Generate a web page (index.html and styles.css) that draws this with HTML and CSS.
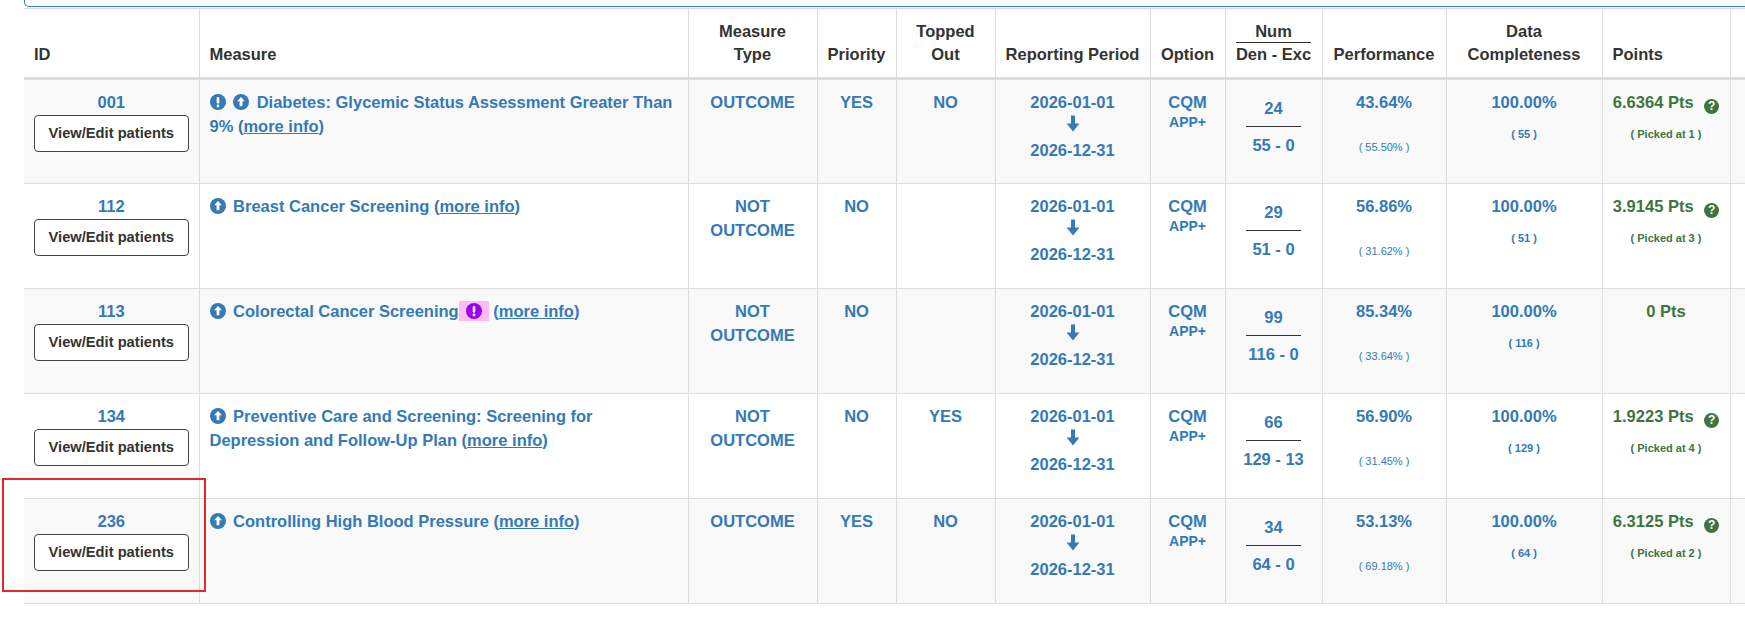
FILE: index.html
```html
<!DOCTYPE html>
<html lang="en">
<head>
<meta charset="utf-8">
<title>Quality Measures</title>
<link rel="stylesheet" href="styles.css">
</head>
<body>
<div class="page">
  <div class="panel-edge"></div>
  <table class="measures">
    <colgroup>
      <col class="c-id"><col class="c-measure"><col class="c-type"><col class="c-prio"><col class="c-top"><col class="c-period"><col class="c-opt"><col class="c-num"><col class="c-perf"><col class="c-dc"><col class="c-pts"><col class="c-extra">
    </colgroup>
    <thead>
      <tr>
        <th class="left first">ID</th>
        <th class="left">Measure</th>
        <th>Measure<br>Type</th>
        <th>Priority</th>
        <th>Topped<br>Out</th>
        <th>Reporting Period</th>
        <th>Option</th>
        <th><div class="numhd"><div class="numhd-top">Num</div>Den - Exc</div></th>
        <th>Performance</th>
        <th>Data<br>Completeness</th>
        <th class="left">Points</th>
        <th></th>
      </tr>
    </thead>
    <tbody>
      <tr>
        <td class="first"><div>001</div><button class="btn" type="button">View/Edit patients</button></td>
        <td class="measure"><svg class="ico" viewBox="0 0 16 16"><circle cx="8" cy="8" r="8" fill="#337ab7"/><rect x="6.7" y="3" width="2.6" height="6.6" rx="1.2" fill="#fff"/><circle cx="8" cy="12" r="1.45" fill="#fff"/></svg> <svg class="ico" viewBox="0 0 16 16"><circle cx="8" cy="8" r="8" fill="#337ab7"/><path d="M8 3.1 L11.9 7.3 H9.4 V12.3 H6.6 V7.3 H4.1 Z" fill="#fff"/></svg> Diabetes: Glycemic Status Assessment Greater Than 9% (<a href="#">more info</a>)</td>
        <td>OUTCOME</td>
        <td>YES</td>
        <td>NO</td>
        <td><div>2026-01-01</div><div class="arr"><svg viewBox="0 0 14 17"><path d="M5 0.5 H9 V8.6 H13.4 L7 16.5 L0.6 8.6 H5 Z" fill="#337ab7"/></svg></div><div>2026-12-31</div></td>
        <td><div>CQM</div><div class="app">APP+</div></td>
        <td><div class="fn">24</div><div class="fl"></div><div class="fd">55 - 0</div></td>
        <td><div>43.64%</div><div class="sm pf">( 55.50% )</div></td>
        <td><div>100.00%</div><div class="sm dc">( 55 )</div></td>
        <td class="pts"><div class="pline">6.6364 Pts <span class="q">?</span></div><div class="sm dc">( Picked at 1 )</div></td>
        <td></td>
      </tr>
      <tr>
        <td class="first"><div>112</div><button class="btn" type="button">View/Edit patients</button></td>
        <td class="measure"><svg class="ico" viewBox="0 0 16 16"><circle cx="8" cy="8" r="8" fill="#337ab7"/><path d="M8 3.1 L11.9 7.3 H9.4 V12.3 H6.6 V7.3 H4.1 Z" fill="#fff"/></svg> Breast Cancer Screening (<a href="#">more info</a>)</td>
        <td>NOT OUTCOME</td>
        <td>NO</td>
        <td></td>
        <td><div>2026-01-01</div><div class="arr"><svg viewBox="0 0 14 17"><path d="M5 0.5 H9 V8.6 H13.4 L7 16.5 L0.6 8.6 H5 Z" fill="#337ab7"/></svg></div><div>2026-12-31</div></td>
        <td><div>CQM</div><div class="app">APP+</div></td>
        <td><div class="fn">29</div><div class="fl"></div><div class="fd">51 - 0</div></td>
        <td><div>56.86%</div><div class="sm pf">( 31.62% )</div></td>
        <td><div>100.00%</div><div class="sm dc">( 51 )</div></td>
        <td class="pts"><div class="pline">3.9145 Pts <span class="q">?</span></div><div class="sm dc">( Picked at 3 )</div></td>
        <td></td>
      </tr>
      <tr>
        <td class="first"><div>113</div><button class="btn" type="button">View/Edit patients</button></td>
        <td class="measure"><svg class="ico" viewBox="0 0 16 16"><circle cx="8" cy="8" r="8" fill="#337ab7"/><path d="M8 3.1 L11.9 7.3 H9.4 V12.3 H6.6 V7.3 H4.1 Z" fill="#fff"/></svg> Colorectal Cancer Screening<span class="flag"><svg viewBox="0 0 16 16"><circle cx="8" cy="8" r="8" fill="#9a00f5"/><rect x="6.7" y="3" width="2.6" height="6.6" rx="1.2" fill="#fff"/><circle cx="8" cy="12" r="1.45" fill="#fff"/></svg></span> (<a href="#">more info</a>)</td>
        <td>NOT OUTCOME</td>
        <td>NO</td>
        <td></td>
        <td><div>2026-01-01</div><div class="arr"><svg viewBox="0 0 14 17"><path d="M5 0.5 H9 V8.6 H13.4 L7 16.5 L0.6 8.6 H5 Z" fill="#337ab7"/></svg></div><div>2026-12-31</div></td>
        <td><div>CQM</div><div class="app">APP+</div></td>
        <td><div class="fn">99</div><div class="fl"></div><div class="fd">116 - 0</div></td>
        <td><div>85.34%</div><div class="sm pf">( 33.64% )</div></td>
        <td><div>100.00%</div><div class="sm dc">( 116 )</div></td>
        <td class="pts"><div class="pline">0 Pts</div></td>
        <td></td>
      </tr>
      <tr>
        <td class="first"><div>134</div><button class="btn" type="button">View/Edit patients</button></td>
        <td class="measure"><svg class="ico" viewBox="0 0 16 16"><circle cx="8" cy="8" r="8" fill="#337ab7"/><path d="M8 3.1 L11.9 7.3 H9.4 V12.3 H6.6 V7.3 H4.1 Z" fill="#fff"/></svg> Preventive Care and Screening: Screening for Depression and Follow-Up Plan (<a href="#">more info</a>)</td>
        <td>NOT OUTCOME</td>
        <td>NO</td>
        <td>YES</td>
        <td><div>2026-01-01</div><div class="arr"><svg viewBox="0 0 14 17"><path d="M5 0.5 H9 V8.6 H13.4 L7 16.5 L0.6 8.6 H5 Z" fill="#337ab7"/></svg></div><div>2026-12-31</div></td>
        <td><div>CQM</div><div class="app">APP+</div></td>
        <td><div class="fn">66</div><div class="fl"></div><div class="fd">129 - 13</div></td>
        <td><div>56.90%</div><div class="sm pf">( 31.45% )</div></td>
        <td><div>100.00%</div><div class="sm dc">( 129 )</div></td>
        <td class="pts"><div class="pline">1.9223 Pts <span class="q">?</span></div><div class="sm dc">( Picked at 4 )</div></td>
        <td></td>
      </tr>
      <tr>
        <td class="first"><div>236</div><button class="btn" type="button">View/Edit patients</button></td>
        <td class="measure"><svg class="ico" viewBox="0 0 16 16"><circle cx="8" cy="8" r="8" fill="#337ab7"/><path d="M8 3.1 L11.9 7.3 H9.4 V12.3 H6.6 V7.3 H4.1 Z" fill="#fff"/></svg> Controlling High Blood Pressure (<a href="#">more info</a>)</td>
        <td>OUTCOME</td>
        <td>YES</td>
        <td>NO</td>
        <td><div>2026-01-01</div><div class="arr"><svg viewBox="0 0 14 17"><path d="M5 0.5 H9 V8.6 H13.4 L7 16.5 L0.6 8.6 H5 Z" fill="#337ab7"/></svg></div><div>2026-12-31</div></td>
        <td><div>CQM</div><div class="app">APP+</div></td>
        <td><div class="fn">34</div><div class="fl"></div><div class="fd">64 - 0</div></td>
        <td><div>53.13%</div><div class="sm pf">( 69.18% )</div></td>
        <td><div>100.00%</div><div class="sm dc">( 64 )</div></td>
        <td class="pts"><div class="pline">6.3125 Pts <span class="q">?</span></div><div class="sm dc">( Picked at 2 )</div></td>
        <td></td>
      </tr>
    </tbody>
  </table>
  <div class="annot"></div>
</div>
</body>
</html>
```
FILE: styles.css
```css
* { box-sizing: border-box; }
html, body { margin: 0; padding: 0; overflow: hidden; background: #fff; }
body {
  font-family: "Liberation Sans", Arial, Helvetica, sans-serif;
  font-size: 16.5px;
  color: #333;
}
.page { position: relative; width: 1745px; height: 629px; overflow: hidden; }

.panel-edge {
  margin-left: 24px;
  width: 1800px;
  height: 7px;
  border-left: 1px solid #337ab7;
  border-bottom: 1px solid #337ab7;
  border-bottom-left-radius: 5px;
}

.measures {
  margin-left: 24px;
  margin-top: 1px;
  width: 1826px;
  border-collapse: collapse;
  table-layout: fixed;
}
.c-id { width: 175px; }
.c-measure { width: 489px; }
.c-type { width: 129px; }
.c-prio { width: 79px; }
.c-top { width: 99px; }
.c-period { width: 155px; }
.c-opt { width: 75px; }
.c-num { width: 97px; }
.c-perf { width: 124px; }
.c-dc { width: 156px; }
.c-pts { width: 128px; }
.c-extra { width: 120px; }

.measures th {
  font-weight: bold;
  line-height: 23px;
  padding: 11px 10px 11px;
  vertical-align: bottom;
  text-align: center;
  white-space: nowrap;
  color: #333;
  background: #fff;
  border: 1px solid #ddd;
  border-bottom: 3px solid #ddd;
}
.measures th.left { text-align: left; }
.measures .first { border-left: 0; }

.numhd { display: inline-block; }
.numhd-top { border-bottom: 1px solid #333; line-height: 22px; }

.measures tbody tr { height: 105px; }
.measures tbody tr:nth-child(odd) td { background: #f9f9f9; }
.measures td {
  padding: 10px;
  vertical-align: top;
  text-align: center;
  line-height: 24px;
  font-weight: bold;
  color: #337ab7;
  border: 1px solid #ddd;
}
.measures td.measure { text-align: left; }
.measure a { color: #337ab7; text-decoration: underline; }

.ico { display: inline-block; width: 16px; height: 16px; vertical-align: -2px; margin-right: 3px; }
.flag {
  display: inline-block;
  background: #fcbdf3;
  padding: 2px 7px;
  line-height: 0;
  vertical-align: -4px;
}
.flag svg { display: block; width: 16px; height: 16px; }

.btn {
  display: block;
  width: 100%;
  margin-top: 1px;
  padding: 7px 12px;
  font-family: "Liberation Sans", Arial, sans-serif;
  font-size: 14.7px;
  line-height: 21px;
  font-weight: bold;
  color: #333;
  background: #fff;
  border: 1px solid #444;
  border-radius: 4px;
}

.arr { height: 23px; }
.arr svg { display: block; width: 14px; height: 17px; margin: 1px auto 0; }

.app { font-size: 14px; line-height: 17px; }

.fn { padding: 6px 0; }
.fl { width: 55px; margin: 0 auto; border-top: 1px solid #333; }
.fd { padding-top: 6px; }

.sm { font-size: 11px; line-height: 16px; }
.sm.pf { margin-top: 25px; font-weight: normal; }
.sm.dc { margin-top: 12px; }

.measures td.pts { color: #3c763d; }
.pline { white-space: nowrap; margin: 0 -4px; }
.q {
  display: inline-block;
  width: 15px;
  height: 15px;
  margin-left: 6px;
  border-radius: 50%;
  background: #3c763d;
  color: #fff;
  font-size: 12px;
  line-height: 15px;
  text-align: center;
  vertical-align: -2px;
}

.annot {
  position: absolute;
  left: 2px;
  top: 478px;
  width: 204px;
  height: 114px;
  border: 2px solid #e8262b;
}
```
